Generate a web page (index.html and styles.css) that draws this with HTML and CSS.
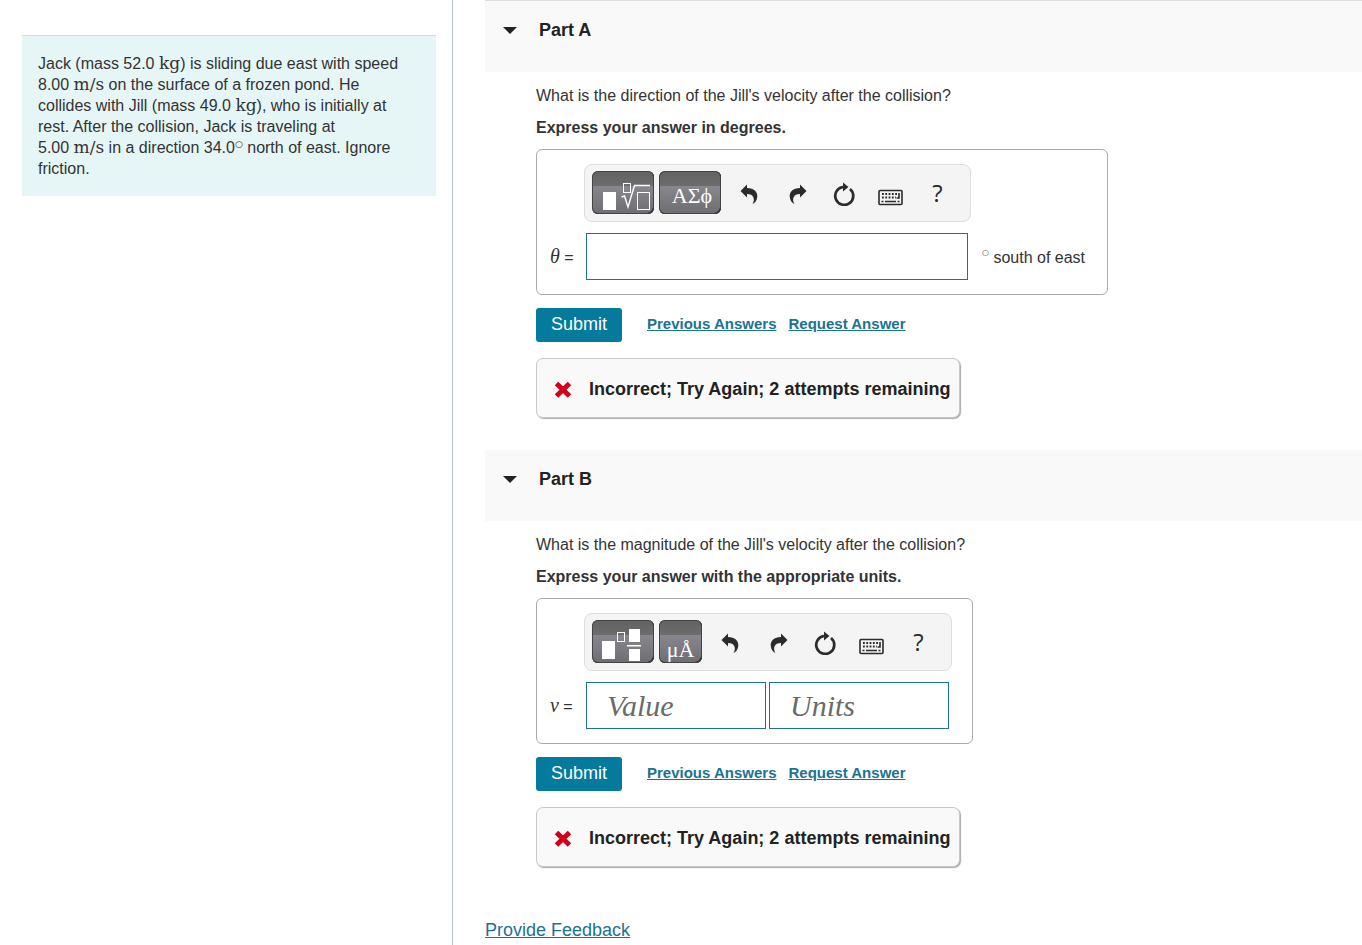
FILE: index.html
```html
<!DOCTYPE html>
<html lang="en">
<head>
  <meta charset="UTF-8">
  <meta name="viewport" content="width=device-width, initial-scale=1.0">
  <title>Collision Problem</title>
  <link rel="stylesheet" href="styles.css">
</head>
<body>
  <svg class="icon-defs" aria-hidden="true">
    <symbol id="undo" viewBox="0 0 26 26">
      <path d="M3.500 11 L10 4.500 V8 C17 8 20.500 12 20.300 16.500 C20 20.500 18 23 15.500 24 C18.500 19 16.500 14 10 14 V17.500 Z"/>
    </symbol>
    <symbol id="redo" viewBox="0 0 26 26">
      <path d="M22.500 11 L16 4.500 V8 C9 8 5.500 12 5.700 16.500 C6 20.500 8 23 10.500 24 C7.500 19 9.500 14 16 14 V17.500 Z"/>
    </symbol>
    <symbol id="reset" viewBox="0 0 26 26">
      <path d="M19 9 A9 9 0 1 1 12 7" fill="none" stroke="#2b2b2b" stroke-width="2.700"/>
      <path d="M12 2.500 L17.500 7 L12 11.500 Z"/>
    </symbol>
    <symbol id="keyboard" viewBox="0 0 26 26">
      <rect x="1" y="10.500" width="23" height="14" rx="1" fill="none" stroke="#2b2b2b" stroke-width="1.600"/>
      <path d="M4 14 H19 M4 17.500 H18" fill="none" stroke="#2b2b2b" stroke-width="1.800" stroke-dasharray="1.800 1.500"/>
      <path d="M21 13 V18 H18.500 M7 21.500 H18 M3.500 21.500 H5.500 M19.500 21.500 H21.500" fill="none" stroke="#2b2b2b" stroke-width="1.600"/>
    </symbol>
    <symbol id="wrong" viewBox="0 0 20 20">
      <path d="M3.500 4.500 L16.500 17 M16.500 4.500 L3.500 17" fill="none" stroke="#d0021b" stroke-width="5"/>
    </symbol>
  </svg>

  <div class="page">
    <aside class="sidebar">
      <div class="problem">
        Jack (mass 52.0 <span class="unit">kg</span>) is sliding due east with speed<br>
        8.00 <span class="unit">m/s</span> on the surface of a frozen pond. He<br>
        collides with Jill (mass 49.0 <span class="unit">kg</span>), who is initially at<br>
        rest. After the collision, Jack is traveling at<br>
        5.00 <span class="unit">m/s</span> in a direction 34.0<span class="degree">○</span> north of east. Ignore<br>
        friction.
      </div>
    </aside>

    <main class="content">
      <section class="part">
        <h2 class="part-header"><button class="part-toggle"><span class="caret"></span>Part A</button></h2>
        <div class="part-body">
          <p class="question">What is the direction of the Jill's velocity after the collision?</p>
          <p class="instructions">Express your answer in degrees.</p>

          <div class="answer-box">
            <div class="toolbar">
              <button class="palette" aria-label="Templates">
                <svg viewBox="0 0 62 43" width="62" height="43">
                  <rect x="11" y="21" width="13" height="18" fill="#fff"/>
                  <rect x="31.500" y="12.500" width="7" height="9" fill="none" stroke="#fff"/>
                  <path d="M29.500 26 L32.500 25 L36 36 L42.500 14.500 H58" fill="none" stroke="#fff" stroke-width="1.400"/>
                  <rect x="45.500" y="21.500" width="12" height="17" fill="none" stroke="#fff"/>
                </svg>
              </button>
              <button class="palette greek" aria-label="Symbols">ΑΣϕ</button>
              <button class="tool" aria-label="Undo"><svg><use href="#undo"/></svg></button>
              <button class="tool" aria-label="Redo"><svg><use href="#redo"/></svg></button>
              <button class="tool" aria-label="Reset"><svg><use href="#reset"/></svg></button>
              <button class="tool" aria-label="Keyboard shortcuts"><svg><use href="#keyboard"/></svg></button>
              <button class="tool help" aria-label="Help">?</button>
            </div>
            <label class="variable" for="theta"><i>θ</i> =</label>
            <div class="fields">
              <input type="text" id="theta" class="field wide">
              <span class="suffix"><span class="degree small">○</span> south of east</span>
            </div>
          </div>

          <div class="actions">
            <button class="submit">Submit</button>
            <a href="#">Previous Answers</a>
            <a href="#">Request Answer</a>
          </div>
          <div class="feedback"><svg><use href="#wrong"/></svg>Incorrect; Try Again; 2 attempts remaining</div>
        </div>
      </section>

      <section class="part">
        <h2 class="part-header"><button class="part-toggle"><span class="caret"></span>Part B</button></h2>
        <div class="part-body">
          <p class="question">What is the magnitude of the Jill's velocity after the collision?</p>
          <p class="instructions">Express your answer with the appropriate units.</p>

          <div class="answer-box">
            <div class="toolbar">
              <button class="palette" aria-label="Templates">
                <svg viewBox="0 0 62 43" width="62" height="43">
                  <rect x="10" y="21" width="13" height="18" fill="#fff"/>
                  <rect x="25.500" y="12.500" width="7" height="9" fill="none" stroke="#fff"/>
                  <rect x="37" y="9" width="11" height="13" fill="#fff"/>
                  <rect x="35" y="25" width="14" height="1.500" fill="#fff"/>
                  <rect x="37" y="29" width="11" height="12" fill="#fff"/>
                </svg>
              </button>
              <button class="palette units" aria-label="Units">μÅ</button>
              <button class="tool" aria-label="Undo"><svg><use href="#undo"/></svg></button>
              <button class="tool" aria-label="Redo"><svg><use href="#redo"/></svg></button>
              <button class="tool" aria-label="Reset"><svg><use href="#reset"/></svg></button>
              <button class="tool" aria-label="Keyboard shortcuts"><svg><use href="#keyboard"/></svg></button>
              <button class="tool help" aria-label="Help">?</button>
            </div>
            <label class="variable" for="value"><i>v</i> =</label>
            <div class="fields">
              <input type="text" id="value" class="field" placeholder="Value">
              <input type="text" id="units" class="field" placeholder="Units" aria-label="Units">
            </div>
          </div>

          <div class="actions">
            <button class="submit">Submit</button>
            <a href="#">Previous Answers</a>
            <a href="#">Request Answer</a>
          </div>
          <div class="feedback"><svg><use href="#wrong"/></svg>Incorrect; Try Again; 2 attempts remaining</div>
        </div>
      </section>

      <a class="provide-feedback" href="#">Provide Feedback</a>
    </main>
  </div>
</body>
</html>
```
FILE: styles.css
```css
* {
  box-sizing: border-box;
}
body {
  margin: 0;
  font-family: "Liberation Sans", Arial, sans-serif;
  font-size: 16px;
  line-height: 22px;
  color: #333;
  background: #fff;
}
button,
input {
  font-family: inherit;
  margin: 0;
}
button {
  cursor: pointer;
}
a {
  color: #1a7390;
}
.icon-defs {
  display: none;
}
.page {
  display: flex;
  min-height: 100vh;
}

/* problem statement */
.sidebar {
  flex: 0 0 453px;
  padding: 35px 16px 0 22px;
  border-right: 1px solid #b9c3c9;
}
.problem {
  padding: 17px 16px;
  border-top: 1px solid #cfdfe2;
  background: #e6f6f7;
  line-height: 21px;
}
.unit {
  font-family: "DejaVu Serif", serif;
  font-size: 17px;
  line-height: 16px;
}
.degree {
  font-family: "DejaVu Sans", sans-serif;
  font-size: 9px;
  line-height: 9px;
  vertical-align: 6px;
}
.small {
  font-size: 8px;
  vertical-align: 8px;
}

/* parts */
.content {
  flex: 1;
  padding-left: 32px;
}
.part {
  margin-bottom: 32px;
}
.part-header {
  margin: 0;
  padding: 18px 18px 31px;
  background: #f9f9f9;
  font-size: 18px;
  line-height: 22px;
}
.part:first-child .part-header {
  border-top: 1px solid #ddd;
}
.part-toggle {
  display: flex;
  align-items: center;
  gap: 22px;
  padding: 0;
  border: none;
  background: transparent;
  color: #222;
  font-size: 18px;
  font-weight: bold;
  line-height: 22px;
}
.caret {
  border: 7px solid transparent;
  border-top-color: #222;
  border-bottom: none;
}
.part-body {
  padding: 13px 0 0 51px;
}
.question,
.instructions {
  margin: 0 0 10px;
}
.instructions {
  font-weight: bold;
}

/* answer box */
.answer-box {
  display: grid;
  grid-template-columns: 34px auto;
  row-gap: 11px;
  width: fit-content;
  padding: 14px 20px 14px 13px;
  border: 1px solid #aaa;
  border-radius: 6px;
}
.toolbar {
  grid-column: 2;
  display: flex;
  width: fit-content;
  height: 58px;
  padding: 6px 9px 6px 7px;
  border: 1px solid #ddd;
  border-radius: 8px;
  background: #f4f4f4;
}
.palette {
  width: 62px;
  height: 43px;
  margin-right: 5px;
  padding: 0;
  border: 0;
  border-radius: 6px;
  background: linear-gradient(#626262, #6c6c6c 34%, #89878e 35%, #6e6d71);
  box-shadow: inset 0 0 0 1px #444, inset -1px -1px 0 #111;
  color: #fff;
  font-family: "Liberation Serif", serif;
  font-size: 22px;
}
.palette svg {
  display: block;
}
.greek {
  padding: 6px 0 0 4px;
}
.units {
  width: 43px;
  padding-top: 16px;
}
.tool {
  display: flex;
  align-items: center;
  justify-content: center;
  width: 47px;
  height: 43px;
  padding: 0;
  border: none;
  background: transparent;
  color: #2b2b2b;
}
.tool svg {
  width: 26px;
  height: 26px;
  fill: #2b2b2b;
}
.help {
  font-family: "Open Sans", sans-serif;
  font-size: 24px;
}
.variable {
  align-self: center;
  white-space: nowrap;
}
.variable i {
  font-family: "Liberation Serif", serif;
  font-size: 20px;
}
.fields {
  display: flex;
  align-items: center;
  gap: 3px;
  padding: 0 2px;
}
.field {
  width: 180px;
  height: 47px;
  padding: 0 20px;
  border: 1px solid #1a7390;
  border-radius: 0;
  background: #fff;
  font-family: "Liberation Serif", serif;
  font-size: 30px;
}
.field::placeholder {
  color: #6a6a6a;
  font-style: italic;
  opacity: 1;
}
.wide {
  width: 382px;
}
.suffix {
  padding: 2px 0 0 11px;
}

/* submit row and result */
.actions {
  display: flex;
  align-items: center;
  gap: 12px;
  margin: 13px 0 16px;
}
.actions a {
  padding-bottom: 2px;
  font-size: 15px;
  font-weight: bold;
}
.submit {
  width: 86px;
  height: 34px;
  margin-right: 13px;
  padding: 0 0 2px;
  border: none;
  border-radius: 3px;
  background: #047a9c;
  color: #fff;
  font-size: 18px;
}
.feedback {
  display: flex;
  align-items: center;
  gap: 16px;
  width: fit-content;
  height: 60px;
  padding: 2px 9px 0 16px;
  border: 1px solid #c7c7c7;
  border-radius: 7px;
  background: #f9f9f9;
  box-shadow: 1px 1px 1px #aaa;
  color: #222;
  font-size: 18px;
  font-weight: bold;
}
.feedback svg {
  width: 20px;
  height: 20px;
}
.provide-feedback {
  display: inline-block;
  margin: 20px 0 4px;
  font-size: 18px;
}
```
